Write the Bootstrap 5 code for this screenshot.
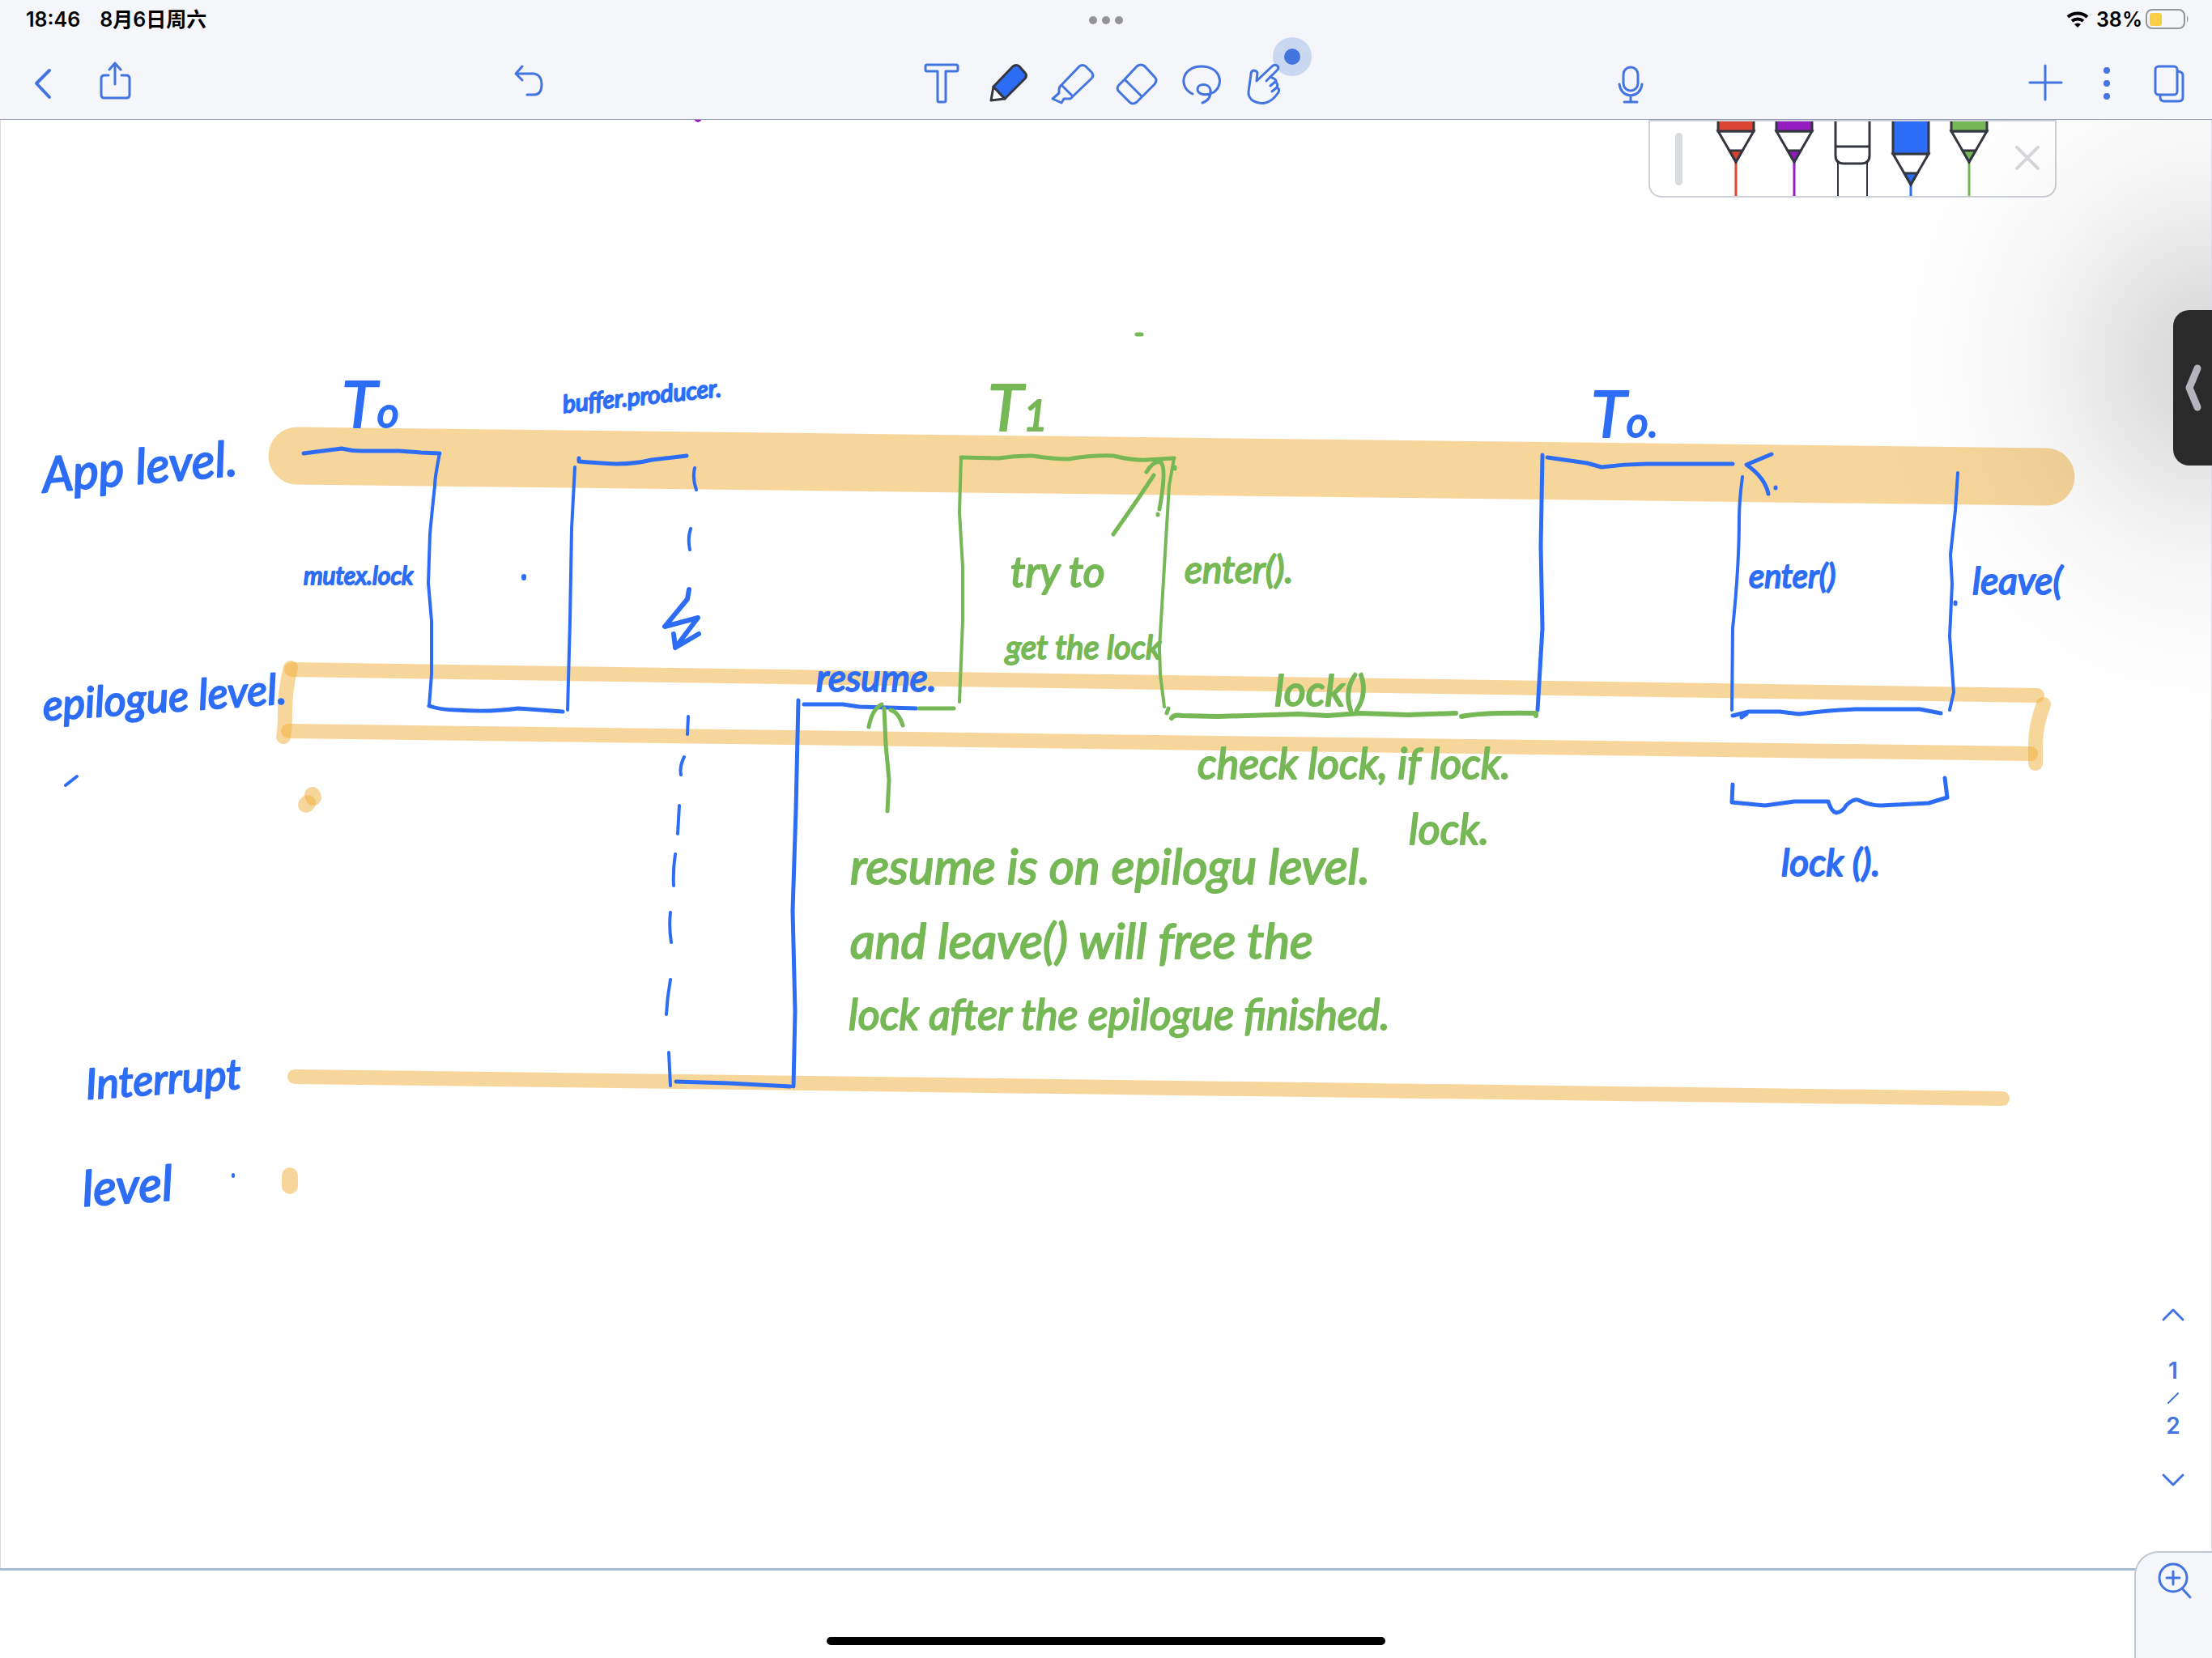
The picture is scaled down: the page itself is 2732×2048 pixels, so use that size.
<!DOCTYPE html>
<html lang="zh-CN">
<head>
<meta charset="utf-8">
<meta name="viewport" content="width=device-width, initial-scale=1">
<title>Notes</title>
<link href="https://cdn.jsdelivr.net/npm/bootstrap@5.3.0/dist/css/bootstrap.min.css" rel="stylesheet">
<script src="https://cdn.jsdelivr.net/npm/bootstrap@5.3.0/dist/js/bootstrap.bundle.min.js" defer></script>
<style>
  :root { --ui-blue: #4374e0; --ink-blue: #2d6df6; --ink-green: #76b756; --bar: #f4f6f9; --dark: #343741; }
  body { font-family: Inter, "Noto Sans CJK SC", sans-serif; background: #fff; color: #000; }
  svg { display: block; fill: none; stroke-linecap: round; stroke-linejoin: round; }
  .topbar { background: var(--bar); border-bottom: 1px solid #979cb5; }
  .status { height: 48px; font-size: 25px; font-weight: 600; line-height: 28px; padding: 0 28px 0 32px; }
  .tools { height: 99px; stroke: var(--ui-blue); }
  .tool { background: none; border: 0; padding: 0; width: 80px; color: var(--ui-blue); }
  .tool svg { width: 100%; height: 84px; stroke: var(--ui-blue); stroke-width: 4; overflow: visible; }
  .tool.slim { width: 76px; }
  .side { flex: 1 1 0; }
  .grow-6 { flex: 6 1 0; } .grow-7 { flex: 7 1 0; }
  .sheet { border: 1px solid #dcdde4; border-width: 0 1px; min-height: 0; }
  .board { width: 100%; height: 100%; }
  .hl { stroke: #f0ae38; stroke-opacity: .5; stroke-width: 18; }
  .ink { stroke-width: 5; }
  .b { stroke: var(--ink-blue); } .g { stroke: var(--ink-green); }
  text { font-family: Lato, sans-serif; font-style: italic; font-weight: 400; stroke-width: 2; }
  text.b { fill: var(--ink-blue); } text.g { fill: var(--ink-green); }
  .s30 { font-size: 30px; } .s40 { font-size: 40px; } .s46 { font-size: 46px; } .s52 { font-size: 52px; } .s60 { font-size: 60px; } .s80 { font-size: 80px; }
  .penbox { top: 0; right: 191px; height: 96px; border: 2px solid #cbcfd7; border-radius: 0 0 16px 16px; background: #fff; }
  .pen { background: none; border: 0; padding: 0; width: 72px; height: 96px; }
  .pen:last-child { width: 70px; }
  .pen svg { width: 72px; height: 96px; stroke: var(--dark); stroke-width: 3; stroke-linejoin: miter; }
  .grip { width: 70px; } .grip i { width: 9px; height: 65px; border-radius: 5px; background: #d9dcdf; }
  .shade { right: 0; top: 0; width: 440px; height: 800px; pointer-events: none;
    background: radial-gradient(ellipse 420px 460px at 100% 300px, rgba(0,0,0,.17), rgba(0,0,0,.11) 25%, rgba(0,0,0,.045) 50%, rgba(0,0,0,.012) 75%, transparent); }
  .drawer { right: -1px; top: 235px; width: 48px; height: 192px; border: 0; padding: 0; background: #2a2a2a; border-radius: 20px 0 0 20px; }
  .pager { right: 23px; top: 1460px; width: 48px; font-size: 28px; line-height: 34px; font-weight: 600; color: var(--ui-blue); }
  .pager svg, .zoomer svg { stroke: var(--ui-blue); stroke-width: 3; }
  .pager .arrow svg { width: 30px; height: 30px; stroke-width: 3; }
  .pager .arrow:first-child { margin-bottom: 38px; }
  .pager .arrow:last-child { margin-top: 42px; }
  .foot { height: 111px; border-top: 3px solid #a9bbd3; }
  .zoomer { right: -1px; bottom: 0; width: 97px; height: 132px; padding: 12px 0 0 0; border: 2px solid #c0c8d0; border-width: 2px 0 0 2px; border-radius: 30px 0 0 0; background: #f4f6fa; }
  .homebar { bottom: 16px; width: 690px; height: 10px; background: #000; border-radius: 5px; }
</style>
</head>
<body class="vh-100 d-flex flex-column overflow-hidden">

<header class="topbar">
  <div class="status d-flex align-items-center position-relative">
    <span>18:46</span><span class="ms-4">8月6日周六</span>
    <svg class="position-absolute top-0 start-50 translate-middle-x" width="44" height="48"><g fill="#949494"><circle cx="6" cy="25" r="5"/><circle cx="22" cy="25" r="5"/><circle cx="38" cy="25" r="5"/></g></svg>
    <svg class="ms-auto me-2" width="30" height="24" viewBox="0 0 30 24" stroke="#000" stroke-width="4"><path stroke-linecap="butt" d="M3 9a18 18 0 0 1 24 0M8 14a11 11 0 0 1 14 0"/><path d="M15 22l-4-4a6 6 0 0 1 8 0z" fill="#000" stroke="none"/></svg>
    <span>38%</span>
    <svg class="ms-1" width="54" height="26" viewBox="0 0 54 26"><rect x="1" y="1" width="47" height="23" rx="7" stroke="#949597" stroke-width="2"/><rect x="5" y="5" width="15" height="16" rx="3" fill="#facd46"/><path d="M51 8q3 4 0 9z" fill="#949597"/></svg>
  </div>
  <nav class="tools d-flex align-items-start" aria-label="工具栏">
    <div class="side d-flex gap-2 ps-3">
      <button class="tool" aria-label="返回"><svg viewBox="16 48 80 84"><path d="M61 87L45 103L61 120"/></svg></button>
      <button class="tool" aria-label="分享"><svg viewBox="104 48 80 84"><path stroke-width="3" d="M142 104V78M135 86L142 78L149 86M134 93H129Q125 93 125 97V117Q125 121 129 121H156Q160 121 160 117V97Q160 93 156 93H150"/></svg></button>
      <button class="tool mx-auto" aria-label="撤销"><svg viewBox="618 48 80 84"><path stroke-width="3" d="M644 82L636 91L644 99M637 91H659Q668 93 668 104Q668 116 660 117H650"/></svg></button>
    </div>
    <div class="d-flex">
      <button class="tool" aria-label="文本"><svg viewBox="1126 48 80 84"><path stroke-width="3" d="M1145 80H1181Q1183 80 1183 82V86Q1183 88 1181 88H1168V124Q1168 126 1166 126H1160Q1158 126 1158 124V88H1145Q1143 88 1143 86V82Q1143 80 1145 80z"/></svg></button>
      <button class="tool" aria-label="钢笔"><svg viewBox="1206 48 80 84"><g stroke="#343741" stroke-width="3"><path fill="#fff" d="M1227 107L1224 124L1241 122z"/><path fill="#2d6df6" d="M1227 107L1251 82Q1255 79 1259 82L1266 90Q1269 93 1266 97L1241 122z"/></g></svg></button>
      <button class="tool" aria-label="荧光笔"><svg viewBox="1286 48 80 84"><path stroke-width="3" d="M1311 105L1333 82Q1337 79 1341 82L1348 89Q1352 93 1348 97L1325 119L1311 105Q1308 107 1308 111V115L1300 122L1311 127L1314 122H1321Q1323 122 1325 119"/></svg></button>
      <button class="tool" aria-label="橡皮擦"><svg viewBox="1366 48 80 84"><path stroke-width="3" d="M1389 98L1404 82Q1409 78 1414 82L1426 95Q1430 99 1426 104L1404 126Q1399 130 1395 126L1382 113Q1378 109 1382 105zL1409 118"/></svg></button>
      <button class="tool" aria-label="套索"><svg viewBox="1446 48 80 84"><path stroke-width="3" d="M1473 116C1455 108 1459 82 1484 82C1507 82 1513 104 1499 114C1490 119 1479 117 1479 110C1479 103 1493 102 1495 111C1496 120 1491 125 1485 127"/></svg></button>
      <button class="tool" aria-label="手势"><svg viewBox="1526 48 80 84"><circle cx="1596" cy="70" r="24" fill="#c9d7f0" stroke="none"/><circle cx="1596" cy="70" r="10" fill="#4374e0" stroke="none"/><path stroke-width="3" fill="#f4f6f9" d="M1552 100L1553 90Q1552 87 1548 87Q1545 88 1545 92L1542 113C1541 124 1553 129 1563 127C1571 125 1575 120 1579 114Q1581 110 1577 108Q1579 104 1576 102Q1577 98 1571 96L1569 95L1578 86Q1580 83 1577 81Q1574 79 1571 82L1552 100z"/><path stroke-width="3" d="M1570 94L1564 100M1575 101L1569 106M1577 108L1571 113"/></svg></button>
    </div>
    <div class="side d-flex pe-3">
      <span class="grow-6"></span>
      <button class="tool" aria-label="录音"><svg viewBox="1976 48 80 84"><g stroke-width="3"><rect x="2005" y="83" width="18" height="29" rx="9"/><path d="M2000 104Q2002 117 2014 118Q2026 117 2028 104M2014 118V125M2006 126H2022"/></g></svg></button>
      <span class="grow-7"></span>
      <button class="tool slim" aria-label="添加"><svg viewBox="2488 48 76 84"><path stroke-width="3" d="M2526 81V123M2507 102H2546"/></svg></button>
      <button class="tool slim" aria-label="更多"><svg viewBox="2564 48 76 84"><g fill="#4374e0" stroke="none"><circle cx="2602" cy="87" r="4"/><circle cx="2602" cy="103" r="4"/><circle cx="2602" cy="119" r="4"/></g></svg></button>
      <button class="tool slim" aria-label="页面"><svg viewBox="2640 48 76 84"><g stroke-width="3"><rect x="2662" y="82" width="27" height="35" rx="4"/><path d="M2668 118V120Q2668 125 2673 125H2691Q2696 125 2696 120V93Q2696 89 2690 88"/></g></svg></button>
    </div>
  </nav>
</header>

<main class="sheet flex-grow-1 position-relative">
  <svg class="board" viewBox="1 148 2730 1789" preserveAspectRatio="xMinYMin meet">
    <!-- highlighter lanes -->
    <g class="hl">
      <path stroke-width="71" d="M367 563L2527 589"/>
      <path d="M360 827L2516 859"/>
      <path d="M356 903L2508 931"/>
      <path d="M359 825Q352 850 352 880Q352 900 350 910"/>
      <path d="M2524 870Q2514 896 2514 920V943"/>
      <path d="M364 1330L2473 1357"/>
      <path stroke-width="20" d="M386 982L387 985"/>
      <path stroke-width="20" d="M380 992L378 994"/>
      <path stroke-width="20" d="M358 1452L358 1465"/>
    </g>
    <path stroke="#951cc0" stroke-width="4" d="M860 148L862 149L864 148"/>
    <!-- blue pen -->
    <g class="ink b">
      <path d="M375 560L422 554Q434 557 446 557H493L520 559L543 560M530 872Q545 877 563 877Q605 880 640 875L695 879M715 566V570Q740 572 760 573Q785 573 805 568L848 563"/>
      <path stroke-width="4" d="M543 560Q537 590 537 600Q533 637 531 660L529 720L533 767V833L530 872M701 877L704 767L706 653L710 577"/>
      <path stroke-width="4" d="M858 578Q855 590 860 605M853 653Q849 665 852 679M850 885L849 907M845 935Q839 947 841 957M839 995L837 1030M834 1055Q831 1075 832 1094M828 1127Q826 1145 829 1164M828 1210Q824 1232 823 1253M826 1300L828 1341M95 959L81 970M288 1451V1453"/>
      <path stroke-width="6" d="M851 728L849 740L821 774L862 763L834 800L832 783M834 800L863 783M647 712V714"/>
      <path d="M835 1336L900 1338L976 1342M980 1342L982 1250L979 1125L983 1000L986 865M993 870H1041L1061 873L1132 875"/>
      <path d="M1905 562L1903 675L1905 776L1899 877M1911 565L1960 572L1978 577Q2008 573 2038 573H2140M2188 561L2157 574Q2180 590 2184 610M2193 602V603"/>
      <path d="M2140 884L2160 879H2198L2222 882Q2260 877 2293 876H2371L2397 881M2415 744V746M2151 886L2157 882"/>
      <path stroke-width="4" d="M2152 589Q2148 620 2148 640Q2148 700 2140 776L2139 877M2408 877L2413 855L2408 786L2411 721L2409 685L2415 630L2418 584"/>
      <path d="M2140 969L2139 991L2180 995L2216 990H2258Q2262 1003 2268 1004Q2276 1003 2280 995Q2290 985 2297 989Q2310 995 2323 995L2382 992L2405 985L2402 961"/>
    </g>
    <!-- green pen -->
    <g class="ink g">
      <path d="M1404 413H1410M1135 875H1178M1187 565L1233 566Q1255 563 1275 563Q1300 567 1320 567Q1350 562 1375 563Q1400 569 1416 568L1450 566M1443 875L1441 881M1451 577V579"/>
      <path stroke-width="4" d="M1185 867L1189 767V700L1185 633L1187 565M1450 566L1444 600L1439 683L1432 800L1433 833L1438 873"/>
      <path d="M1375 660L1405 617L1425 587M1416 583Q1425 568 1434 571Q1441 580 1432 629M1430 635V636M1073 898Q1077 876 1089 870M1100 877Q1110 880 1115 896M1092 875L1094 920L1098 963L1096 1002"/>
      <path stroke-width="6" d="M1447 887Q1450 882 1460 884L1504 885L1604 882L1639 884L1680 881L1739 883L1798 881M1805 885Q1830 880 1897 881V884"/>
    </g>
    <!-- blue notes -->
    <text class="b s60" transform="rotate(-5 56 608)" x="54" y="608">App level.</text>
    <text class="b s80" x="422" y="528">T<tspan class="s52">o</tspan></text>
    <text class="b s30" transform="rotate(-6 696 510)" x="696" y="510">buffer.producer.</text>
    <text class="b s30" x="375" y="722">mutex.lock</text>
    <text class="b s52" transform="rotate(-4 54 890)" x="54" y="890">epilogue level.</text>
    <text class="b s52" transform="rotate(-4 105 1358)" x="107" y="1358">Interrupt</text>
    <text class="b s60" transform="rotate(-4 103 1490)" x="103" y="1490">level</text>
    <text class="b s46" x="1008" y="854">resume.</text>
    <text class="b s80" x="1965" y="540">T<tspan class="s52">o.</tspan></text>
    <text class="b s40" x="2160" y="726">enter()</text>
    <text class="b s46" x="2436" y="734">leave(</text>
    <text class="b s46" x="2200" y="1082">lock ().</text>
    <!-- green notes -->
    <text class="g s80" x="1220" y="532">T<tspan class="s52">1</tspan></text>
    <text class="g s52" x="1248" y="725">try to</text>
    <text class="g s40" x="1242" y="814">get the lock</text>
    <text class="g s46" x="1463" y="720">enter().</text>
    <text class="g s52" x="1574" y="872">lock()</text>
    <text class="g s52" x="1479" y="962">check lock, if lock.</text>
    <text class="g s52" x="1740" y="1043">lock.</text>
    <text class="g s60" x="1050" y="1092">resume is on epilogu level.</text>
    <text class="g s60" x="1050" y="1184">and leave() will free the</text>
    <text class="g s52" x="1048" y="1272">lock after the epilogue finished.</text>
  </svg>

  <div class="penbox position-absolute d-flex overflow-hidden">
    <span class="grip d-flex justify-content-center align-items-center"><i></i></span>
    <button class="pen" aria-label="红色笔"><svg viewBox="0 2 72 96"><path stroke="#db4632" d="M36 52V99"/><path fill="#fff" d="M14 14L36 52L58 14z"/><path fill="#db4632" d="M14 -4H58V14H14zM28 38H44L36 52z"/></svg></button>
    <button class="pen" aria-label="紫色笔"><svg viewBox="0 2 72 96"><path stroke="#951cc0" d="M36 52V99"/><path fill="#fff" d="M14 14L36 52L58 14z"/><path fill="#951cc0" d="M14 -4H58V14H14zM28 38H44L36 52z"/></svg></button>
    <button class="pen" aria-label="橡皮"><svg viewBox="0 2 72 96"><path stroke-width="2" d="M18 52V99M54 52V99"/><path fill="#fff" d="M15 -4V44Q15 54 25 54H47Q57 54 57 44V-4zM15 33H57"/></svg></button>
    <button class="pen" aria-label="蓝色笔"><svg viewBox="0 2 72 96"><path stroke="#2d6df6" d="M36 80V99"/><path fill="#fff" d="M14 42L36 80L58 42z"/><path fill="#2d6df6" d="M14 -4H58V42H14zM28 66H44L36 80z"/></svg></button>
    <button class="pen" aria-label="绿色笔"><svg viewBox="0 2 72 96"><path stroke="#76b756" d="M36 52V99"/><path fill="#fff" d="M14 14L36 52L58 14z"/><path fill="#76b756" d="M14 -4H58V14H14zM28 38H44L36 52z"/></svg></button>
    <button class="pen" aria-label="关闭"><svg viewBox="0 2 72 96"><path stroke="#d6d8dc" stroke-linecap="round" stroke-width="4" d="M23 34L49 60M49 34L23 60"/></svg></button>
  </div>

  <div class="shade position-absolute"></div>
  <button class="drawer position-absolute" aria-label="展开"><svg width="48" height="192" stroke="#b5b3bb" stroke-width="9"><path d="M30 72L20 96L30 120"/></svg></button>

  <div class="pager position-absolute d-flex flex-column align-items-center">
    <button class="tool arrow d-flex justify-content-center" aria-label="上一页"><svg viewBox="0 0 30 30"><path d="M3 22L15 10L27 22"/></svg></button>
    <span>1</span>
    <svg width="14" height="34"><path stroke-width="2" d="M1 23L13 11"/></svg>
    <span>2</span>
    <button class="tool arrow d-flex justify-content-center" aria-label="下一页"><svg viewBox="0 0 30 30"><path d="M3 2L15 14L27 2"/></svg></button>
  </div>
</main>

<footer class="foot position-relative">
  <button class="zoomer position-absolute d-flex justify-content-center align-items-start" aria-label="放大"><svg width="44" height="48" viewBox="0 0 44 48"><g stroke-width="3"><circle cx="20" cy="19" r="17"/><path d="M12 19H28M20 11V27M31 32L41 43"/></g></svg></button>
  <div class="homebar position-absolute start-50 translate-middle-x"></div>
</footer>
</body>
</html>
